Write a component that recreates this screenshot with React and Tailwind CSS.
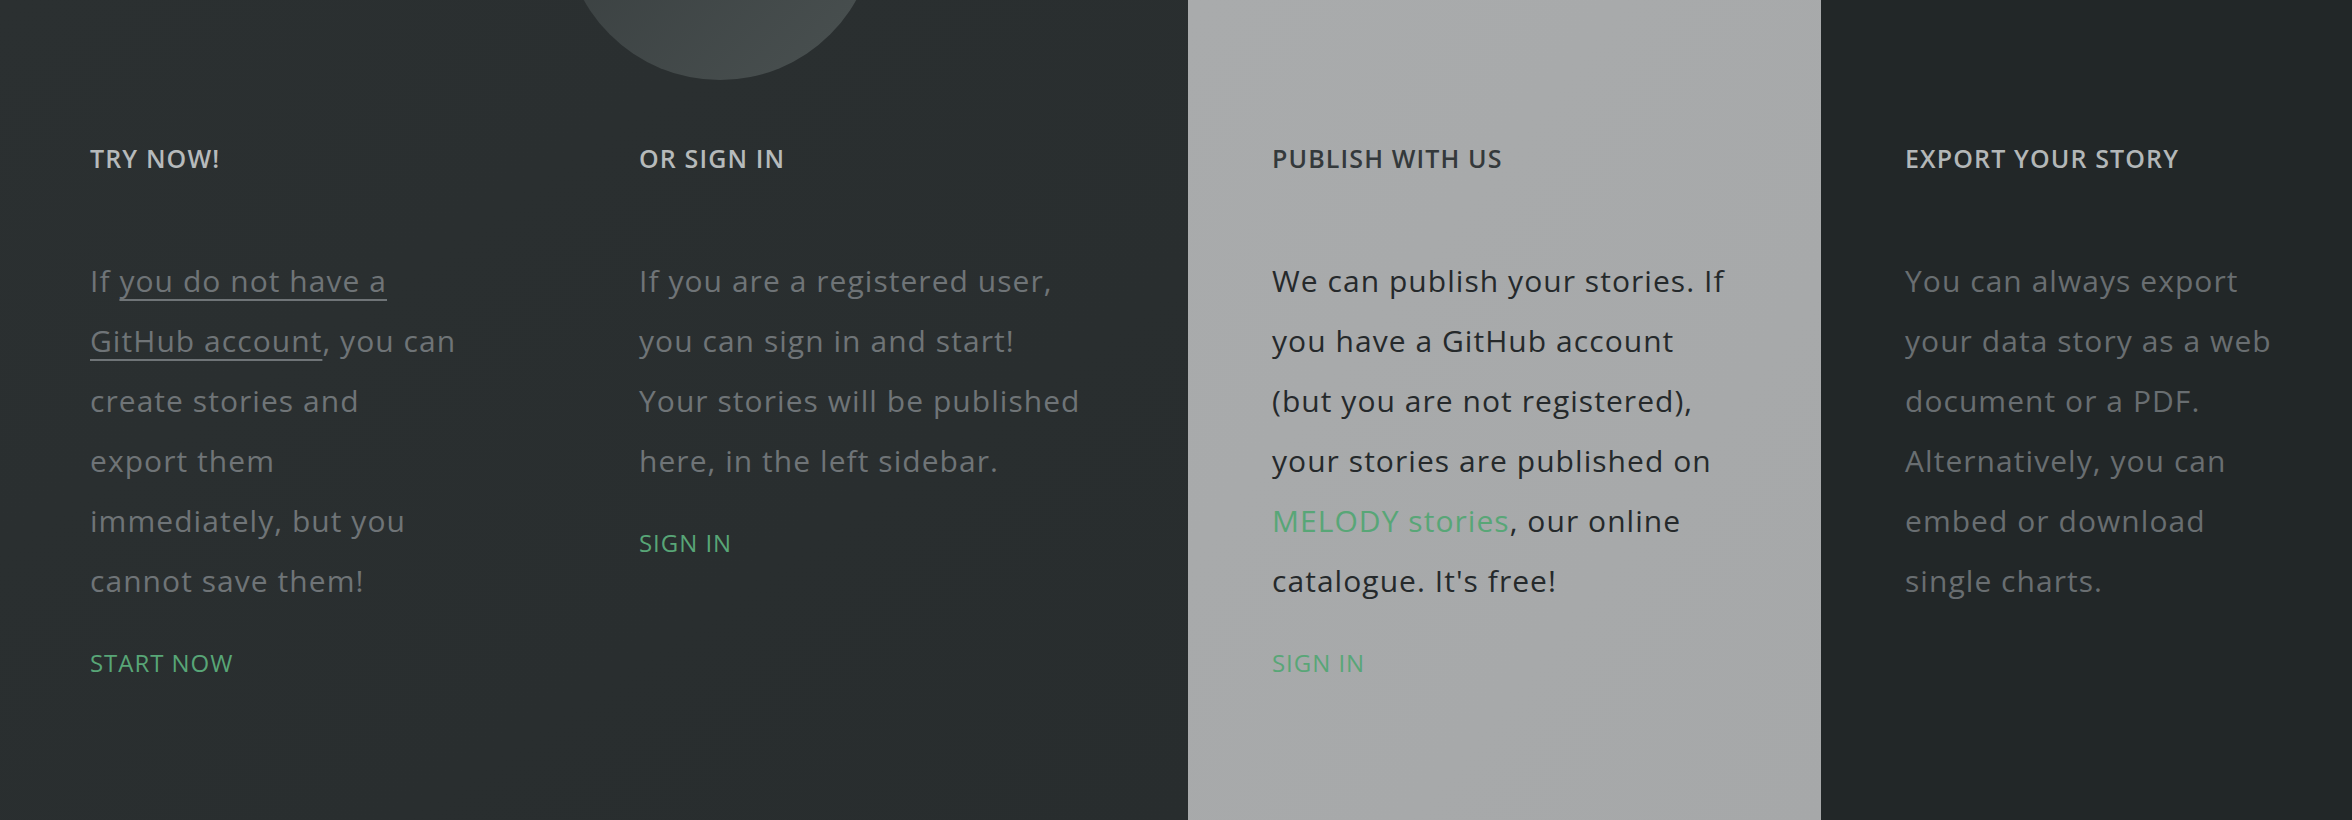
export default function App() {
  const font = { fontFamily: '"Open Sans", "Noto Sans", sans-serif' };

  const heading = "text-[25px] leading-[28px] font-semibold tracking-[0.045em]";
  const body = "mt-[79px] whitespace-nowrap text-[30px] leading-[60px] tracking-[0.035em]";
  const link = "block mt-[38px] text-[24px] leading-[28px] tracking-[0.04em] text-[#58a677]";

  return (
    <div
      className="relative flex w-[2352px] h-[820px] overflow-hidden bg-[#292e2f]"
      style={font}
    >
      {/* dark area: two columns */}
      <div className="relative flex w-[1188px] shrink-0 pl-[90px] bg-gradient-to-br from-[#2b3031] to-[#282d2e]">
        <div className="absolute left-[564px] top-[-232px] w-[312px] h-[312px] rounded-full bg-gradient-to-br from-[#343a3b] to-[#4a5151]" />

        <div className="w-[549px] shrink-0 pt-[144px]">
          <h3 className={`${heading} text-[#b6babb]`}>TRY NOW!</h3>
          <p className={`${body} text-[#6f7477]`}>
            If{" "}
            <a className="underline underline-offset-[7px] decoration-[2px]">
              you do not have a
              <br />
              GitHub account
            </a>
            , you can
            <br />
            create stories and
            <br />
            export them
            <br />
            immediately, but you
            <br />
            cannot save them!
          </p>
          <a className={link}>START NOW</a>
        </div>

        <div className="relative pt-[144px]">
          <h3 className={`${heading} text-[#b6babb]`}>OR SIGN IN</h3>
          <p className={`${body} text-[#6f7477]`}>
            If you are a registered user,
            <br />
            you can sign in and start!
            <br />
            Your stories will be published
            <br />
            here, in the left sidebar.
          </p>
          <a className={link}>SIGN IN</a>
        </div>
      </div>

      {/* light panel */}
      <div className="w-[633px] shrink-0 px-[84px] pt-[144px] bg-gradient-to-br from-[#a9abac] to-[#a6a8a9]">
        <h3 className={`${heading} text-[#34393b]`}>PUBLISH WITH US</h3>
        <p className={`${body} text-[#25292b]`}>
          We can publish your stories. If
          <br />
          you have a GitHub account
          <br />
          (but you are not registered),
          <br />
          your stories are published on
          <br />
          <a className="text-[#58a677]">MELODY stories</a>, our online
          <br />
          catalogue. It's free!
        </p>
        <a className={link}>SIGN IN</a>
      </div>

      {/* right panel */}
      <div className="flex-1 px-[84px] pt-[144px] bg-[#222728]">
        <h3 className={`${heading} text-[#b3b7b8]`}>EXPORT YOUR STORY</h3>
        <p className={`${body} text-[#696e71]`}>
          You can always export
          <br />
          your data story as a web
          <br />
          document or a PDF.
          <br />
          Alternatively, you can
          <br />
          embed or download
          <br />
          single charts.
        </p>
      </div>
    </div>
  );
}
